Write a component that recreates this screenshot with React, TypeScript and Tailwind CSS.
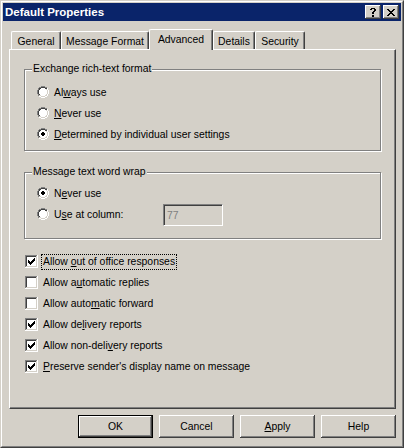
import React from "react";

const C: Record<string, string> = {
  G: "#808080",
  K: "#404040",
  H: "#ffffff",
  L: "#d4d0c8",
  W: "#ffffff",
  X: "#000000",
};

function Pix({ rows }: { rows: string[] }) {
  const h = rows.length;
  const w = rows[0].length;
  const rects: React.ReactNode[] = [];
  rows.forEach((r, y) => {
    for (let x = 0; x < r.length; x++) {
      const c = C[r[x]];
      if (c) rects.push(<rect key={x + "-" + y} x={x} y={y} width={1} height={1} fill={c} />);
    }
  });
  return (
    <svg width={w} height={h} viewBox={`0 0 ${w} ${h}`} shapeRendering="crispEdges" className="block shrink-0">
      {rects}
    </svg>
  );
}

const RADIO = [
  "....GGGG....",
  "..GGKKKKGG..",
  ".GKKWWWWKKH.",
  ".GKWWWWWWLH.",
  "GKWWWWWWWWLH",
  "GKWWWWWWWWLH",
  "GKWWWWWWWWLH",
  "GKWWWWWWWWLH",
  ".GKWWWWWWLH.",
  ".GLLWWWWLLH.",
  "..HHLLLLHH..",
  "....HHHH....",
];
const RADIO_ON = RADIO.map((r, y) => {
  const a = r.split("");
  if (y === 4 || y === 7) { a[5] = "X"; a[6] = "X"; }
  if (y === 5 || y === 6) { a[4] = "X"; a[5] = "X"; a[6] = "X"; a[7] = "X"; }
  return a.join("");
});

const CHECK = ["......X", ".....XX", "X...XXX", "XX.XXX.", "XXXXX..", ".XXX...", "..X...."];
const BOX = [
  "GGGGGGGGGGGGH",
  "GKKKKKKKKKKLH",
  "GKWWWWWWWWWLH",
  "GKWWWWWWWWWLH",
  "GKWWWWWWWWWLH",
  "GKWWWWWWWWWLH",
  "GKWWWWWWWWWLH",
  "GKWWWWWWWWWLH",
  "GKWWWWWWWWWLH",
  "GKWWWWWWWWWLH",
  "GKWWWWWWWWWLH",
  "GLLLLLLLLLLLH",
  "HHHHHHHHHHHHH",
];
const BOX_ON = BOX.map((r, y) => {
  if (y < 3 || y > 9) return r;
  const a = r.split("");
  const cr = CHECK[y - 3];
  for (let i = 0; i < 7; i++) if (cr[i] === "X") a[3 + i] = "X";
  return a.join("");
});

const CLOSE = [
  "XX....XX",
  ".XX..XX.",
  "..XXXX..",
  "...XX...",
  "..XXXX..",
  ".XX..XX.",
  "XX....XX",
];
const QUESTION = [
  ".XXXX.",
  "XX..XX",
  "....XX",
  "...XX.",
  "..XX..",
  "..XX..",
  "......",
  "..XX..",
  "..XX..",
];

const bevel = "shadow-[inset_-1px_-1px_#404040,inset_1px_1px_#ffffff,inset_-2px_-2px_#808080,inset_2px_2px_#d4d0c8]";

function Radio({ on, children }: { on?: boolean; children: React.ReactNode }) {
  return (
    <div className="flex h-[20px] items-center">
      <Pix rows={on ? RADIO_ON : RADIO} />
      <span className="ml-[5px]">{children}</span>
    </div>
  );
}

function Check({ on, focus, children }: { on?: boolean; focus?: boolean; children: React.ReactNode }) {
  return (
    <div className="flex h-[21px] items-center">
      <Pix rows={on ? BOX_ON : BOX} />
      <span
        className={
          "ml-[3px] px-px leading-[14px] border border-dotted " +
          (focus ? "border-black" : "border-transparent")
        }
      >
        {children}
      </span>
    </div>
  );
}

function Group({ title, className, children }: { title: string; className: string; children: React.ReactNode }) {
  return (
    <div className={"relative w-[357px] border border-[#808080] shadow-[inset_1px_1px_#ffffff,1px_1px_#ffffff] " + className}>
      <span className="absolute left-[7px] top-[-8px] bg-[#d4d0c8] px-px leading-[13px]">{title}</span>
      {children}
    </div>
  );
}

function Tab({ label, w, selected }: { label: string; w: string; selected?: boolean }) {
  if (selected) {
    return (
      <div
        className={
          "relative z-10 mb-[-1px] flex h-[21px] items-start justify-center whitespace-nowrap bg-[#d4d0c8] pt-[3px] border-t border-l border-r border-t-white border-l-white border-r-[#404040] rounded-tl-[2px] rounded-tr-[2px] shadow-[inset_-1px_0_#808080] " +
          w
        }
      >
        {label}
      </div>
    );
  }
  return (
    <div
      className={
        "flex h-[18px] items-start justify-center whitespace-nowrap pt-[3px] border-t border-l border-r border-t-white border-l-white border-r-[#404040] rounded-tl-[2px] rounded-tr-[2px] shadow-[inset_-1px_0_#808080] " +
        w
      }
    >
      {label}
    </div>
  );
}

function Btn({ children, def }: { children: React.ReactNode; def?: boolean }) {
  if (def) {
    return (
      <div className="h-[23px] w-[75px] border border-black">
        <div className="flex h-full w-full items-center justify-center shadow-[inset_-1px_-1px_#404040,inset_1px_1px_#ffffff,inset_-2px_-2px_#808080]">
          {children}
        </div>
      </div>
    );
  }
  return <div className={"flex h-[23px] w-[75px] items-center justify-center " + bevel}>{children}</div>;
}

export default function App() {
  return (
    <div className="h-[448px] w-[404px] bg-[#d4d0c8] font-['Liberation_Sans',Arial,sans-serif] text-[10.4px] leading-[13px] text-black">
      <div className="flex h-full w-full flex-col border border-t-[#d4d0c8] border-l-[#d4d0c8] border-r-[#404040] border-b-[#404040]">
        <div className="flex flex-1 flex-col border border-t-white border-l-white border-r-[#808080] border-b-[#808080] p-px">
          {/* Title bar */}
          <div className="flex h-[18px] items-center justify-between bg-[#0a246a] pl-[2px] pr-[2px]">
            <span className="text-[11.5px] font-bold text-white">Default Properties</span>
            <div className="flex gap-[2px]">
              <div className={"flex h-[14px] w-[16px] items-center justify-center bg-[#d4d0c8] " + bevel}>
                <Pix rows={QUESTION} />
              </div>
              <div className={"flex h-[14px] w-[16px] items-center justify-center bg-[#d4d0c8] " + bevel}>
                <Pix rows={CLOSE} />
              </div>
            </div>
          </div>

          {/* Tabs */}
          <div className="ml-[8px] mt-[8px] flex h-[20px] items-end">
            <Tab label="General" w="w-[50px]" />
            <Tab label="Message Format" w="w-[88px]" />
            <Tab label="Advanced" w="w-[64px]" selected />
            <Tab label="Details" w="w-[42px]" />
            <Tab label="Security" w="w-[50px]" />
          </div>

          {/* Panel */}
          <div className="ml-[6px] flex h-[360px] w-[387px] flex-col border border-t-white border-l-white border-r-[#404040] border-b-[#404040] pl-[14px] pt-[19px] shadow-[inset_-1px_-1px_#808080]">
            <Group title="Exchange rich-text format" className="h-[82px] pl-[12px] pt-[12px]">
              <div className="flex flex-col gap-px">
                <Radio>
                  Al<u>w</u>ays use
                </Radio>
                <Radio>
                  <u>N</u>ever use
                </Radio>
                <Radio on>
                  <u>D</u>etermined by individual user settings
                </Radio>
              </div>
            </Group>

            <Group title="Message text word wrap" className="mt-[21px] h-[67px] pl-[12px] pt-[10px]">
              <div className="flex flex-col gap-px">
                <Radio on>
                  N<u>e</u>ver use
                </Radio>
                <div className="flex items-start">
                  <div className="flex h-[20px] w-[126px] items-center">
                    <Pix rows={RADIO} />
                    <span className="ml-[5px]">
                      U<u>s</u>e at column:
                    </span>
                  </div>
                  <div className="flex h-[22px] w-[60px] items-center border border-t-[#808080] border-l-[#808080] border-r-white border-b-white pl-[3px] text-[#808080] shadow-[inset_1px_1px_#404040,inset_-1px_-1px_#d4d0c8]">
                    77
                  </div>
                </div>
              </div>
            </Group>

            <div className="ml-px mt-[12px] flex flex-col">
              <Check on focus>
                Allow <u>o</u>ut of office responses
              </Check>
              <Check>
                Allow a<u>u</u>tomatic replies
              </Check>
              <Check>
                Allow auto<u>m</u>atic forward
              </Check>
              <Check on>
                Allow de<u>l</u>ivery reports
              </Check>
              <Check on>
                Allow non-deli<u>v</u>ery reports
              </Check>
              <Check on>
                <u>P</u>reserve sender's display name on message
              </Check>
            </div>
          </div>

          {/* Buttons */}
          <div className="mt-[6px] flex justify-end gap-[6px] pr-[5px]">
            <Btn def>OK</Btn>
            <Btn>Cancel</Btn>
            <Btn>
              <u>A</u>pply
            </Btn>
            <Btn>Help</Btn>
          </div>
        </div>
      </div>
    </div>
  );
}
